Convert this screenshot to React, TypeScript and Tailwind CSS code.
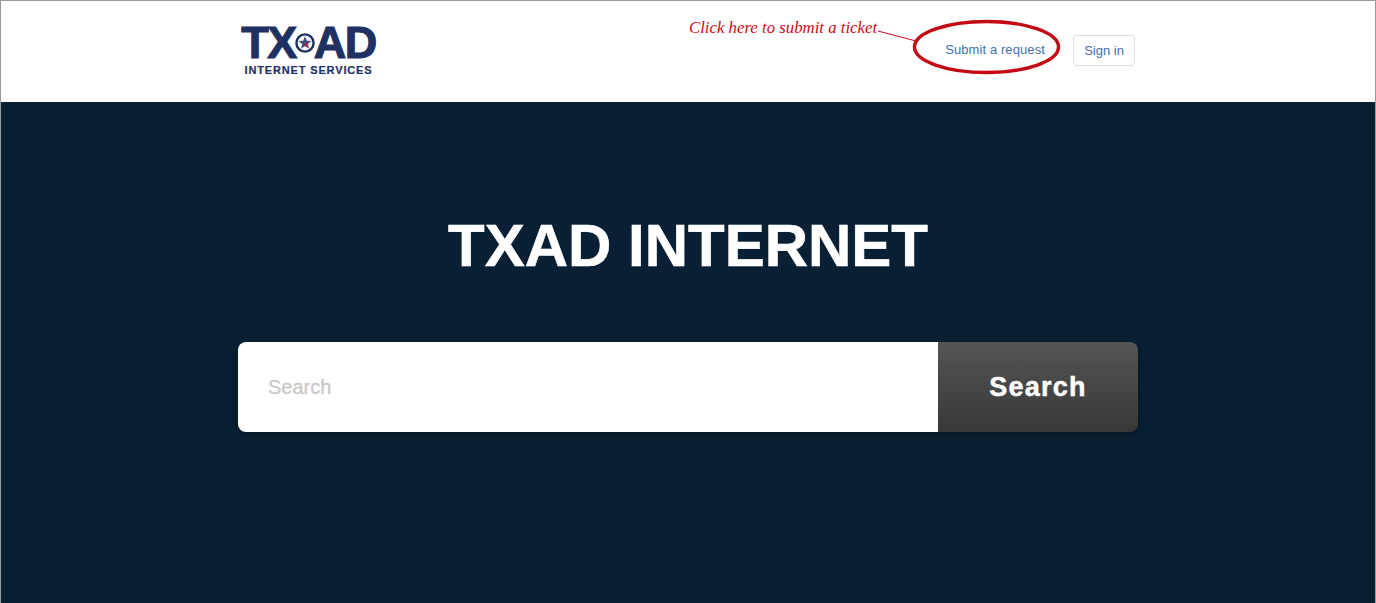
import React from "react";

function Logo() {
  return (
    <div className="flex w-[137px] flex-col items-center text-[#1f3163] font-['Liberation_Sans',Arial,sans-serif] font-bold">
      <div className="flex h-[36px] items-center text-[45px] leading-[36px] tracking-[-1.5px] [-webkit-text-stroke:1.1px_#1f3163]">
        <span>TX</span>
        <svg width="20" height="20" viewBox="0 0 20 20" className="mx-[-1px] shrink-0">
          <circle cx="10" cy="10" r="8.6" fill="#f4f5f8" stroke="#1f3163" strokeWidth="2.4" />
          <path d="M10 3.2l1.7 4.6 4.8.2-3.8 3 1.3 4.7L10 13.1l-4 2.6 1.3-4.7-3.8-3 4.8-.2z" fill="#3c4d7e" />
          <path d="M10 9.5l3.4 1.4-.6 3.4-2.8-1.6z" fill="#b0283a" />
        </svg>
        <span>AD</span>
      </div>
      <div className="mt-[3px] text-[11px] leading-[12px] tracking-[0.85px] whitespace-nowrap [-webkit-text-stroke:0.2px_#1f3163]">INTERNET SERVICES</div>
    </div>
  );
}

export default function App() {
  return (
    <div className="flex h-[603px] flex-col overflow-hidden border-x border-t border-[#9a9a9a] bg-white font-['Liberation_Sans',Arial,sans-serif]">
      <header className="relative h-[101px] shrink-0 bg-white">
        <div className="mx-auto flex h-full w-[900px] items-center justify-between pl-[3px] pr-[3px]">
          <div className="mb-[3px] -ml-[1px]"><Logo /></div>
          <nav className="mb-[2px] flex items-center gap-[28px] text-[13px] text-[#4470ab]">
            <a className="mb-[2px] tracking-[0.1px]">Submit a request</a>
            <a className="flex h-[31px] w-[62px] items-center justify-center rounded-[3px] border border-[#dcdfe6] text-[13px]">Sign in</a>
          </nav>
        </div>
        <svg className="absolute left-[877px] top-[17px] pointer-events-none" width="190" height="58" viewBox="0 0 190 58" fill="none">
          <path d="M0 13L38 23" stroke="#c9101c" strokeWidth="1" />
          <ellipse cx="108.5" cy="29" rx="72" ry="25.5" stroke="#c40a14" strokeWidth="3.4" />
        </svg>
        <span className="absolute left-[688px] top-[17px] font-['Liberation_Serif',serif] text-[16.8px] italic leading-[20px] text-[#cf0a18] whitespace-nowrap">
          Click here to submit a ticket
        </span>
      </header>
      <main className="flex flex-1 flex-col items-center bg-[#091f33]">
        <h1 className="mt-[108px] text-[60px] font-bold leading-[72px] text-white [-webkit-text-stroke:0.6px_white]">TXAD INTERNET</h1>
        <div className="mt-[60px] flex h-[90px] w-[900px] rounded-[8px] shadow-[0_2px_8px_rgba(0,0,0,0.3)]">
          <div className="flex flex-1 items-center rounded-l-[8px] bg-white pl-[30px] text-[20px] text-[#c9c9c9] [-webkit-text-stroke:0.3px_#c9c9c9]">Search</div>
          <button className="w-[200px] rounded-r-[8px] bg-gradient-to-b from-[#555555] to-[#383838] text-[27px] font-bold tracking-[1.2px] text-white [-webkit-text-stroke:0.5px_white]">
            Search
          </button>
        </div>
      </main>
    </div>
  );
}
